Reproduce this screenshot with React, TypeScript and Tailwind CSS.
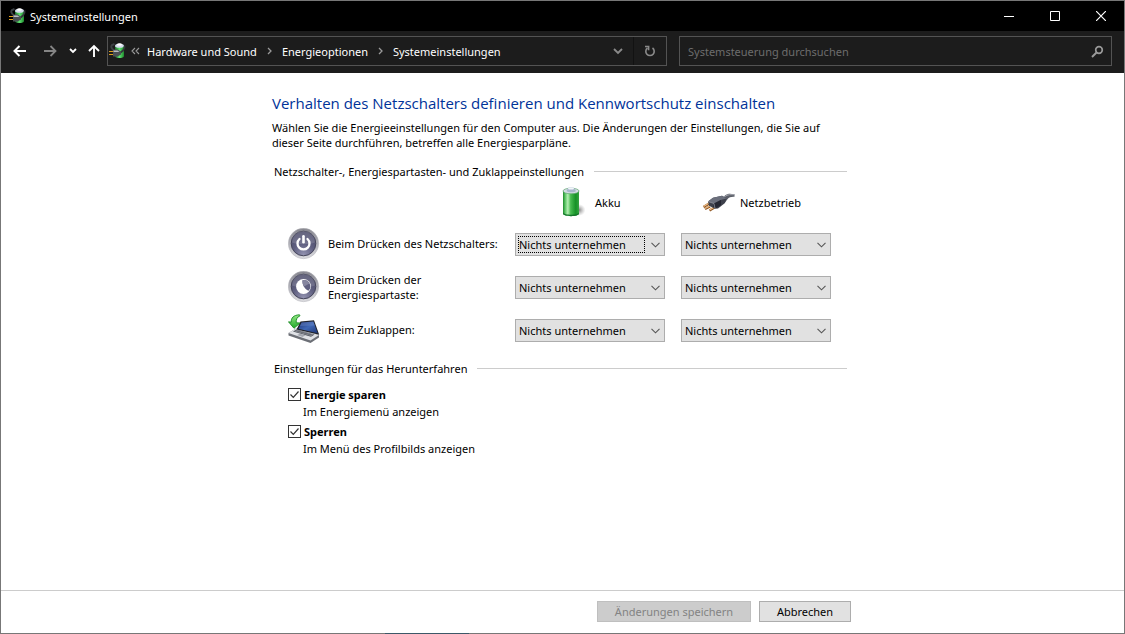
import React, { useState } from 'react';

function EnergyIcon() {
  return (
    <svg width="18" height="18" viewBox="0 0 18 18" aria-hidden="true" className="shrink-0">
      <defs>
        <linearGradient id="energyGreen" x1="0" x2="1" y1="0" y2="0">
          <stop offset="0" stopColor="#1f6f2c" />
          <stop offset="0.5" stopColor="#5fe070" />
          <stop offset="1" stopColor="#1d8a2c" />
        </linearGradient>
      </defs>
      <path d="M4.500 8C2.500 6.500 1.500 4.500 3 3l2.500-1" stroke="#3c4043" strokeWidth="2" fill="none" />
      <path d="M6 4v10c0 2.800 9 2.800 9 0V4z" fill="url(#energyGreen)" />
      <ellipse cx="10.500" cy="3.800" rx="4.500" ry="2" fill="#d5dced" />
      <ellipse cx="10.500" cy="2.500" rx="2.500" ry="1.300" fill="#ffffff" />
      <path d="M11 11l3-2.500c1.500-1.500 2-3 1.500-5" stroke="#33373a" strokeWidth="1.800" fill="none" />
      <path d="M4 7.500h4.500l3.500 2v3L8.500 14.500H4z" fill="#4b4f54" />
      <path d="M4.500 8.500h4l2 1.500h-6z" fill="#b9bdc1" />
      <path d="M0 9.500h4M0 12.500h4" stroke="#dfa01d" strokeWidth="1.200" />
    </svg>
  );
}

function BatteryIcon() {
  return (
    <svg width="32" height="32" viewBox="0 0 32 32" aria-hidden="true" className="shrink-0">
      <defs>
        <linearGradient id="batteryBody" x1="0" x2="1" y1="0" y2="0">
          <stop offset="0" stopColor="#1d8a2b" />
          <stop offset="0.14" stopColor="#5fc768" />
          <stop offset="0.3" stopColor="#b4efb2" />
          <stop offset="0.48" stopColor="#47bb50" />
          <stop offset="0.8" stopColor="#169127" />
          <stop offset="1" stopColor="#37a543" />
        </linearGradient>
        <radialGradient id="batteryShade">
          <stop offset="0" stopColor="#666" stopOpacity="0.800" />
          <stop offset="1" stopColor="#999" stopOpacity="0" />
        </radialGradient>
      </defs>
      <ellipse cx="24" cy="24" rx="6.500" ry="6" fill="url(#batteryShade)" />
      <path d="M8 5V27.500c0 3.500 16 3.500 16 0V5z" fill="url(#batteryBody)" />
      <path d="M8 26.500v1c0 3.500 16 3.500 16 0v-1c-1 3-15 3-16 0z" fill="#14752a" />
      <ellipse cx="16" cy="5" rx="8" ry="2.800" fill="#d3dbe3" stroke="#5fa670" strokeWidth="0.700" />
      <path d="M11.500 5l1.500-2.800c1-1.400 5-1.400 6 0L21 5c-1 1.700-8.500 1.700-9.500 0z" fill="#a7b6cb" />
      <ellipse cx="16" cy="2.400" rx="3" ry="1.200" fill="#f2f5fa" />
    </svg>
  );
}

function PlugIcon() {
  return (
    <svg width="34" height="32" viewBox="0 0 34 32" aria-hidden="true" className="shrink-0">
      <path d="M19 13c4-1 4-4 8-5 2.500-.5 4.500.3 6.500.2v2.500c-3-.2-5.500.300-7 2.500-1 1.500-2 3-4.500 4z" fill="#5b5e68" />
      <path d="M20 12.500c4-1 4.500-3.500 8.500-3.800h5" stroke="#a5a8b0" strokeWidth="1" fill="none" />
      <path d="M9 17l-6.500 4M9 20.500l-5 2.500M15 20.500l-6.500 4" stroke="#8c5320" strokeWidth="2.400" />
      <path d="M9 16.500l-6.500 4M9 20l-5 2.500M15 20l-6.500 4" stroke="#f0bf88" strokeWidth="1.200" />
      <path d="M7 15.500l5-3.800 9-2 4.500 2.800-1.500 4.500-7 5.500-3 .3-6-3z" fill="#3d404b" />
      <path d="M7 15.500l5-3.800 9-2 4.500 2.800-6 1.500-6.500 3.500z" fill="#6b6f7c" />
      <path d="M13 17.500l7-3.500v5l-4.500 3-3.500-1.500z" fill="#252733" />
      <path d="M7 15.500l6 2 1 5" stroke="#9699a4" strokeWidth="0.700" fill="none" />
    </svg>
  );
}

function RoundButton({ kind }: { kind: 'power' | 'sleep' }) {
  return (
    <svg width="32" height="32" viewBox="0 0 32 32" aria-hidden="true" className="shrink-0">
      <defs>
        <linearGradient id={kind + 'Rim'} x1="0" x2="0" y1="0" y2="1">
          <stop offset="0" stopColor="#86868e" />
          <stop offset="0.5" stopColor="#b0b0b8" />
          <stop offset="1" stopColor="#dcdce0" />
        </linearGradient>
        <radialGradient id={kind + 'Face'} cx="0.5" cy="0.95" r="0.9">
          <stop offset="0" stopColor="#9292b0" />
          <stop offset="0.5" stopColor="#5f5f80" />
          <stop offset="1" stopColor="#4c4c6a" />
        </radialGradient>
      </defs>
      <circle cx="15.500" cy="15.500" r="15.200" fill={'url(#' + kind + 'Rim)'} stroke="#b4b4ba" strokeWidth="0.500" />
      <circle cx="15.500" cy="15.500" r="12.300" fill={'url(#' + kind + 'Face)'} stroke="#44445a" strokeWidth="1" />
      <path d="M4 14.500a11.500 11.500 0 0 1 23 0c-6 2-17 2-23 0z" fill="#ffffff" opacity="0.150" />
      {kind === 'power' ? (
        <g fill="none" stroke="#ffffff" strokeLinecap="round">
          <path d="M11.500 11a6 6 0 1 0 8 0" strokeWidth="2.300" />
          <path d="M15.500 8.300v6" strokeWidth="2.600" />
        </g>
      ) : (
        <g>
          <circle cx="15.500" cy="15.500" r="7.400" fill="#ffffff" />
          <path d="M14.500 9.200c-.5 4.300 2 8.800 6 10.500a6.300 6.300 0 0 0-6-10.500z" fill="#5f5f80" />
          <path d="M14.500 9.200c-.2 2.300.3 4.400 1.500 6.300l5.500-3a6.300 6.300 0 0 0-7-3.300z" fill="#85859f" />
        </g>
      )}
    </svg>
  );
}

function LidIcon() {
  return (
    <svg width="32" height="32" viewBox="0 0 32 32" aria-hidden="true" className="shrink-0">
      <defs>
        <linearGradient id="lidScreen" x1="0" x2="1" y1="0" y2="1">
          <stop offset="0" stopColor="#1d3277" />
          <stop offset="0.5" stopColor="#3f67b5" />
          <stop offset="1" stopColor="#1c3474" />
        </linearGradient>
        <linearGradient id="lidArrow" x1="0" x2="0" y1="0" y2="1">
          <stop offset="0" stopColor="#96e886" />
          <stop offset="1" stopColor="#1fa928" />
        </linearGradient>
      </defs>
      <path d="M0.500 19L8 14.500l23 6.500v2.500l-8.500 5.500L0.500 21.500z" fill="#6c6f76" />
      <path d="M0.500 19L8 14.500l23 6.500-8.500 5.500z" fill="#dfe1e5" />
      <path d="M5 17.500l3.500-2 18 5-3.500 2.200z" fill="#4d5059" />
      <path d="M6.500 17l17.500 4.800M8 16l17.500 4.800" stroke="#b9bcc3" strokeWidth="0.500" />
      <path d="M9 21l3-1.300 5.500 1.500-3 1.800z" fill="#a3a6ae" />
      <path d="M8.500 15.500L12.500 7.500l13.500-1.200L31.200 20.800z" fill="#202229" />
      <path d="M10.500 14.800L13.500 8.500l11.800-1L29.700 19.300z" fill="url(#lidScreen)" />
      <path d="M13.500 8.500l11.800-1 1.600 4-14.900.5z" fill="#7796d0" opacity="0.350" />
      <path d="M11.500.8C5.500 1 3 4 3.200 8.200L.5 7.800l5.500 6.500 6-5.300-3.800-.2C8 5.500 9 3 12 1.800z" fill="url(#lidArrow)" stroke="#168a20" strokeWidth="0.900" strokeLinejoin="round" />
    </svg>
  );
}

function Crumb({ children }: { children: React.ReactNode }) {
  return (
    <a href="#" className="whitespace-nowrap text-white">
      {children}
    </a>
  );
}

function CrumbArrow() {
  return (
    <svg width="5" height="8" viewBox="0 0 5 8" aria-hidden="true" className="mx-[10px] shrink-0">
      <path d="M1 1l3 3-3 3" fill="none" stroke="#9a9a9a" strokeWidth="1.300" />
    </svg>
  );
}

const actions = ['Nichts unternehmen', 'Energie sparen', 'Herunterfahren', 'Bildschirm ausschalten'];

function ActionSelect({ label, focused = false }: { label: string; focused?: boolean }) {
  return (
    <div className="relative">
      <select
        aria-label={label}
        className="block h-[23px] w-full appearance-none border border-[#adadad] bg-[#e1e1e1] pl-[3px] pr-5 text-[11px] leading-5 text-black outline-none"
      >
        {actions.map((action) => (
          <option key={action}>{action}</option>
        ))}
      </select>
      {focused && (
        <span className="pointer-events-none absolute inset-y-[3px] left-[3px] right-5 border border-dotted border-black" />
      )}
      <svg width="9" height="6" viewBox="0 0 9 6" aria-hidden="true" className="pointer-events-none absolute right-[5px] top-[9px]">
        <path d="M0.500 0.800l4 4 4-4" fill="none" stroke="#555" strokeWidth="1.100" />
      </svg>
    </div>
  );
}

function SectionTitle({ children }: { children: React.ReactNode }) {
  return (
    <div className="flex items-center gap-[10px] pl-[2px]">
      <h2 className="whitespace-nowrap">{children}</h2>
      <span className="h-px flex-1 bg-[#cccccc]" />
    </div>
  );
}

function ShutdownOption({ id, title, note }: { id: string; title: string; note: string }) {
  const [checked, setChecked] = useState(true);
  return (
    <div>
      <div className="flex h-[17px] items-center gap-[3px]">
        <span className="relative size-[13px]">
          <input
            id={id}
            type="checkbox"
            checked={checked}
            onChange={() => setChecked(!checked)}
            className="peer block size-[13px] appearance-none border border-[#333333] bg-white"
          />
          <svg width="13" height="13" viewBox="0 0 13 13" aria-hidden="true" className="pointer-events-none invisible absolute inset-0 peer-checked:visible">
            <path d="M2.500 6.500l2.800 2.800 5.200-5.800" fill="none" stroke="#333" strokeWidth="1.200" />
          </svg>
        </span>
        <label htmlFor={id} className="font-bold">
          {title}
        </label>
      </div>
      <p className="pl-[15px] leading-[17px]">{note}</p>
    </div>
  );
}

const rows = [
  { icon: <RoundButton kind="power" />, label: 'Beim Drücken des Netzschalters:' },
  { icon: <RoundButton kind="sleep" />, label: 'Beim Drücken der Energiespartaste:' },
  { icon: <LidIcon />, label: 'Beim Zuklappen:' },
];

export default function App() {
  return (
    <div className="relative flex min-h-screen flex-col border border-[#777777] bg-white font-['Noto_Sans','Open_Sans',sans-serif] text-[11px] leading-[15px] text-black">
      <header>
        <div className="flex h-[30px] items-center bg-black pl-2 text-white">
          <EnergyIcon />
          <h1 className="ml-[3px] flex-1">Systemeinstellungen</h1>
          <button aria-label="Minimieren" className="flex h-full w-[46px] items-center justify-center">
            <svg width="10" height="10" viewBox="0 0 10 10"><path d="M0 5.500h10" stroke="#fff" /></svg>
          </button>
          <button aria-label="Maximieren" className="flex h-full w-[46px] items-center justify-center">
            <svg width="10" height="10" viewBox="0 0 10 10"><path d="M.5.500h9v9h-9z" fill="none" stroke="#fff" /></svg>
          </button>
          <button aria-label="Schließen" className="flex h-full w-[46px] items-center justify-center">
            <svg width="10" height="10" viewBox="0 0 10 10"><path d="M0 0l10 10M10 0L0 10" stroke="#fff" strokeWidth="1.200" /></svg>
          </button>
        </div>
        <nav className="flex h-[42px] items-center bg-[#1c1c1c] pb-[2px] pr-3">
          <div className="flex w-[106px] shrink-0 items-center pl-3">
            <button aria-label="Zurück" className="mr-[16px]">
              <svg width="14" height="12" viewBox="0 0 14 12" className="block"><path d="M6.500 1l-5 5 5 5M1.500 6H13" fill="none" stroke="#fff" strokeWidth="2" /></svg>
            </button>
            <button aria-label="Vorwärts" className="mr-[12px]">
              <svg width="14" height="12" viewBox="0 0 14 12" className="block"><path d="M7.500 1l5 5-5 5M12.500 6H1" fill="none" stroke="#858585" strokeWidth="1.800" /></svg>
            </button>
            <button aria-label="Verlauf" className="mr-[11px]">
              <svg width="8" height="6" viewBox="0 0 8 6" className="block"><path d="M1 1l3 3 3-3" fill="none" stroke="#fff" strokeWidth="1.800" /></svg>
            </button>
            <button aria-label="Nach oben">
              <svg width="12" height="14" viewBox="0 0 12 14" className="block"><path d="M1 7l5-5 5 5M6 2v11" fill="none" stroke="#fff" strokeWidth="1.900" /></svg>
            </button>
          </div>
          <div className="flex h-[30px] flex-[557] items-center border border-[#535353] pl-px">
            <EnergyIcon />
            <svg width="9" height="8" viewBox="0 0 9 8" aria-hidden="true" className="ml-1 mr-[7px] shrink-0">
              <path d="M4 1L1 4l3 3M8 1L5 4l3 3" fill="none" stroke="#9a9a9a" strokeWidth="1.100" />
            </svg>
            <Crumb>Hardware und Sound</Crumb>
            <CrumbArrow />
            <Crumb>Energieoptionen</Crumb>
            <CrumbArrow />
            <Crumb>Systemeinstellungen</Crumb>
            <button aria-label="Vorherige Orte" className="ml-auto flex h-full w-[30px] items-center justify-center">
              <svg width="10" height="7" viewBox="0 0 10 7"><path d="M1 1l4 4 4-4" fill="none" stroke="#8a8a8a" strokeWidth="1.800" /></svg>
            </button>
            <button aria-label="Aktualisieren" className="flex h-full w-[33px] items-center justify-center border-l border-[#121212]">
              <svg width="12" height="12" viewBox="0 0 12 12">
                <path d="M8.500 3a4.200 4.200 0 1 1-5 0" fill="none" stroke="#8a8a8a" strokeWidth="1.600" />
                <path d="M1 1.500h3.600v3.800" fill="none" stroke="#8a8a8a" strokeWidth="1.600" />
              </svg>
            </button>
          </div>
          <div className="ml-3 flex h-[30px] flex-[416] items-center border border-[#535353] pl-2 pr-[7px]">
            <input
              type="text"
              aria-label="Systemsteuerung durchsuchen"
              placeholder="Systemsteuerung durchsuchen"
              className="min-w-0 flex-1 bg-transparent text-white outline-none placeholder:text-[#6d6d6d]"
            />
            <svg width="13" height="13" viewBox="0 0 13 13" aria-hidden="true">
              <circle cx="8" cy="5" r="3.300" fill="none" stroke="#999" strokeWidth="1.700" />
              <path d="M5.500 7.500L1 12" stroke="#999" strokeWidth="1.900" />
            </svg>
          </div>
        </nav>
      </header>

      <main className="mx-auto w-full max-w-[581px] flex-1 pr-[6px] pt-[18px]">
        <h2 className="font-['Open_Sans','Noto_Sans',sans-serif] text-[15px] leading-6 text-[#003399]">
          Verhalten des Netzschalters definieren und Kennwortschutz einschalten
        </h2>
        <p className="mt-[5px] max-w-[570px]">
          Wählen Sie die Energieeinstellungen für den Computer aus. Die Änderungen der Einstellungen, die Sie auf dieser Seite durchführen, betreffen alle Energiesparpläne.
        </p>

        <section className="mt-[14px]">
          <SectionTitle>Netzschalter-, Energiespartasten- und Zuklappeinstellungen</SectionTitle>
          <div className="mt-[7px] grid grid-cols-[1fr_150px_150px] items-center gap-x-4 pl-4 pr-4">
            <span />
            <div className="flex items-center gap-2 pl-10">
              <BatteryIcon />
              Akku
            </div>
            <div className="flex items-center gap-[5px] pl-5">
              <PlugIcon />
              Netzbetrieb
            </div>
          </div>
          <div className="mt-[5px] grid auto-rows-[43px] grid-cols-[1fr_150px_150px] items-center gap-x-4 pl-4 pr-4">
            {rows.map((row, index) => (
              <React.Fragment key={row.label}>
                <div className="flex items-center gap-2 pb-[2px]">
                  {row.icon}
                  <span className="max-w-[175px]">{row.label}</span>
                </div>
                <ActionSelect label={row.label + ' Akku'} focused={index === 0} />
                <ActionSelect label={row.label + ' Netzbetrieb'} />
              </React.Fragment>
            ))}
          </div>
        </section>

        <section className="mt-[9px]">
          <SectionTitle>Einstellungen für das Herunterfahren</SectionTitle>
          <div className="mt-[10px] flex flex-col gap-[3px] pl-4">
            <ShutdownOption id="sleep" title="Energie sparen" note="Im Energiemenü anzeigen" />
            <ShutdownOption id="lock" title="Sperren" note="Im Menü des Profilbilds anzeigen" />
          </div>
        </section>
      </main>

      <footer className="border-t border-[#cccccc]">
        <div className="mx-auto flex h-[42px] w-full max-w-[581px] items-center justify-end gap-2 pb-px pr-[2px]">
          <button disabled className="h-[21px] w-[154px] border border-[#bfbfbf] bg-[#cccccc] text-[#838383]">
            Änderungen speichern
          </button>
          <button className="h-[21px] w-[92px] border border-[#adadad] bg-[#e1e1e1]">Abbrechen</button>
        </div>
      </footer>
      <span className="absolute -bottom-px left-[384px] h-px w-[84px] bg-[#3c5868]" />
    </div>
  );
}
